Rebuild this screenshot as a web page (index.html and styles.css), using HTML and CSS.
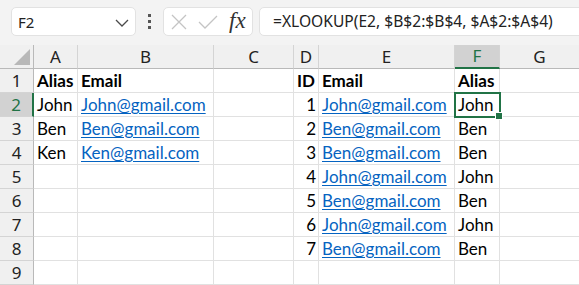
FILE: index.html
```html
<!DOCTYPE html>
<html>
<head>
<meta charset="utf-8">
<link rel="stylesheet" href="styles.css">
</head>
<body>
<div class="app">
  <div class="toolbar">
    <div class="namebox">
      <span class="namebox-text">F2</span>
      <svg class="chev" width="14" height="8" viewBox="0 0 14 8"><path d="M1 1 L7 7 L13 1" fill="none" stroke="#4a4a4a" stroke-width="1.3"/></svg>
    </div>
    <div class="dots"><i></i><i></i><i></i></div>
    <div class="fxbox">
      <svg class="ico-x" width="16" height="16" viewBox="0 0 16 16"><path d="M1 1 L15 15 M15 1 L1 15" fill="none" stroke="#c4c4c4" stroke-width="1.3"/></svg>
      <svg class="ico-check" width="20" height="14" viewBox="0 0 20 14"><path d="M1 7 L7 13 L19 1" fill="none" stroke="#c4c4c4" stroke-width="1.3"/></svg>
      <span class="fx">fx</span>
    </div>
    <div class="formula">=XLOOKUP(E2, $B$2:$B$4, $A$2:$A$4)</div>
  </div>
  <div class="sheet">
    <div class="corner"><span class="tri"></span></div>
    <div class="ch">A</div><div class="ch">B</div><div class="ch">C</div><div class="ch">D</div><div class="ch">E</div><div class="ch ch-sel">F</div><div class="ch">G</div>

    <div class="rh">1</div>
    <div class="c b">Alias</div><div class="c b">Email</div><div class="c"></div><div class="c b">ID</div><div class="c b">Email</div><div class="c b">Alias</div><div class="c"></div>

    <div class="rh rh-sel">2</div>
    <div class="c">John</div><div class="c"><span class="link">John@gmail.com</span></div><div class="c"></div><div class="c num">1</div><div class="c"><span class="link">John@gmail.com</span></div><div class="c active">John<span class="handle"></span></div><div class="c"></div>

    <div class="rh">3</div>
    <div class="c">Ben</div><div class="c"><span class="link">Ben@gmail.com</span></div><div class="c"></div><div class="c num">2</div><div class="c"><span class="link">Ben@gmail.com</span></div><div class="c">Ben</div><div class="c"></div>

    <div class="rh">4</div>
    <div class="c">Ken</div><div class="c"><span class="link">Ken@gmail.com</span></div><div class="c"></div><div class="c num">3</div><div class="c"><span class="link">Ben@gmail.com</span></div><div class="c">Ben</div><div class="c"></div>

    <div class="rh">5</div>
    <div class="c"></div><div class="c"></div><div class="c"></div><div class="c num">4</div><div class="c"><span class="link">John@gmail.com</span></div><div class="c">John</div><div class="c"></div>

    <div class="rh">6</div>
    <div class="c"></div><div class="c"></div><div class="c"></div><div class="c num">5</div><div class="c"><span class="link">Ben@gmail.com</span></div><div class="c">Ben</div><div class="c"></div>

    <div class="rh">7</div>
    <div class="c"></div><div class="c"></div><div class="c"></div><div class="c num">6</div><div class="c"><span class="link">John@gmail.com</span></div><div class="c">John</div><div class="c"></div>

    <div class="rh">8</div>
    <div class="c"></div><div class="c"></div><div class="c"></div><div class="c num">7</div><div class="c"><span class="link">Ben@gmail.com</span></div><div class="c">Ben</div><div class="c"></div>

    <div class="rh">9</div>
    <div class="c"></div><div class="c"></div><div class="c"></div><div class="c"></div><div class="c"></div><div class="c"></div><div class="c"></div>
  </div>
</div>
</body>
</html>
```
FILE: styles.css
```css
html, body {
  margin: 0;
  padding: 0;
  background: #ffffff;
}
.app {
  width: 579px;
  height: 285px;
  overflow: hidden;
  background: #f3f3f3;
  font-family: "Noto Sans", "Open Sans", sans-serif;
}
.toolbar {
  height: 45px;
  box-sizing: border-box;
  padding: 7px 0 0 11px;
  display: flex;
  align-items: flex-start;
  background: #f3f3f3;
}
.namebox {
  width: 125px;
  height: 29px;
  box-sizing: border-box;
  background: #fff;
  border: 1px solid #e2e2e2;
  border-radius: 5px;
  display: flex;
  align-items: center;
  justify-content: space-between;
  padding: 0 6px 0 6px;
  flex: none;
}
.namebox-text {
  font-size: 15px;
  color: #222;
}
.chev { margin-top: 2px; }
.dots {
  width: 27px;
  height: 29px;
  display: flex;
  flex-direction: column;
  align-items: center;
  justify-content: center;
  gap: 3px;
  flex: none;
}
.dots i {
  width: 3px;
  height: 3px;
  background: #555;
  display: block;
}
.fxbox {
  width: 90px;
  height: 29px;
  box-sizing: border-box;
  background: #fff;
  border: 1px solid #e2e2e2;
  border-radius: 5px;
  display: flex;
  align-items: center;
  padding-left: 7px;
  flex: none;
}
.ico-x { margin-right: 11px; }
.ico-check { margin-right: 11px; }
.fx {
  font-family: "Liberation Serif", "DejaVu Serif", serif;
  font-style: italic;
  font-size: 23px;
  color: #333;
  line-height: 1;
  margin-top: -3px;
}
.formula {
  margin-left: 6px;
  width: 340px;
  height: 29px;
  box-sizing: border-box;
  background: #fff;
  border: 1px solid #e2e2e2;
  border-radius: 5px;
  padding-left: 13px;
  font-size: 15.6px;
  line-height: 27px;
  color: #222;
  white-space: nowrap;
  flex: none;
}
.sheet {
  display: grid;
  grid-template-columns: 34px 44px 136px 80px 25px 136px 45px 80px;
  grid-auto-rows: 24px;
  background: #fff;
}
.corner, .ch {
  background: #f0f0f0;
  border-bottom: 1px solid #b9b9b9;
  border-right: 1px solid #d4d4d4;
  box-sizing: border-box;
}
.corner {
  position: relative;
  border-right: 1px solid #b9b9b9;
}
.tri {
  position: absolute;
  right: 3px;
  bottom: 3px;
  width: 0;
  height: 0;
  border-left: 16px solid transparent;
  border-bottom: 16px solid #b8b8b8;
}
.ch {
  font-size: 17px;
  color: #222;
  text-align: center;
  line-height: 23px;
}
.ch-sel {
  background: #d2d2d2;
  color: #217346;
  border-bottom: 2px solid #217346;
  line-height: 22px;
}
.rh {
  background: #f0f0f0;
  border-right: 1px solid #b9b9b9;
  border-bottom: 1px solid #d4d4d4;
  box-sizing: border-box;
  font-size: 17px;
  color: #222;
  text-align: center;
  line-height: 24px;
}
.rh-sel {
  background: #d2d2d2;
  color: #217346;
  border-right: 2px solid #217346;
}
.c {
  border-right: 1px solid #e1e1e1;
  border-bottom: 1px solid #e1e1e1;
  box-sizing: border-box;
  font-family: "Lato", "Liberation Sans", sans-serif;
  font-size: 17px;
  line-height: 23px;
  padding-left: 3px;
  color: #000;
  white-space: nowrap;
}
.b { font-weight: bold; }
.num {
  text-align: right;
  padding-left: 0;
  padding-right: 2px;
}
.link {
  color: #0563c1;
  text-decoration: underline;
  text-underline-offset: 2px;
}
.active {
  position: relative;
  outline: 2px solid #217346;
  outline-offset: -1px;
  z-index: 1;
}
.handle {
  position: absolute;
  right: -4px;
  bottom: -4px;
  width: 6px;
  height: 6px;
  background: #217346;
  border: 1px solid #fff;
  box-sizing: content-box;
}
```
